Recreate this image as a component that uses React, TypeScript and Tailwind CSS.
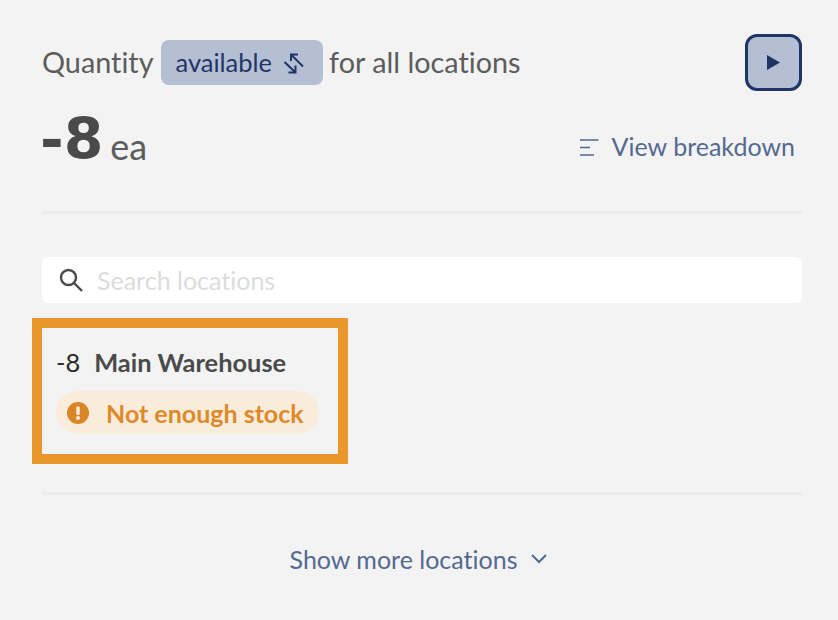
export default function App() {
  return (
    <div className="h-[620px] w-[838px] overflow-hidden bg-[#f3f3f3] pt-[34px] pr-[36px] pl-[42px] font-['Lato',sans-serif] [font-variant-ligatures:none]">
      {/* heading */}
      <div className="flex h-[57px] items-center justify-between">
        <div className="flex items-center text-[28.8px] text-[#5c5c5c]">
          <span>Quantity</span>
          <span className="mr-[6px] ml-[8px] flex h-[45px] items-center gap-[10px] rounded-[8px] bg-[#b5bfd4] pr-[17px] pl-[14px] text-[25.5px] text-[#1f3566]">
            available
            <svg width="24" height="24" viewBox="0 0 24 24" fill="none" stroke="#1f3566" strokeWidth="2">
              <path d="M21 15.5L9 3.5M16 3.5H9V10" />
              <path d="M2.5 11l11 10.5M6.5 21.5h7v-7" />
            </svg>
          </span>
          <span>for all locations</span>
        </div>
        <button className="flex h-[57px] w-[57px] items-center justify-center rounded-[12px] border-[3px] border-[#1f3566] bg-[#b5bfd4]">
          <svg width="13" height="15" viewBox="0 0 13 15" fill="#1f3566">
            <path d="M0 0l13 7.5L0 15z" />
          </svg>
        </button>
      </div>

      <div className="mt-[8px] flex h-[96px] items-center justify-between">
        <div className="mb-[16px] -ml-[2px] flex items-baseline gap-[7px]">
          <span className="font-['DejaVu_Sans',sans-serif] text-[57px] leading-none font-bold text-[#4a4a4a]">-8</span>
          <span className="translate-y-[1px] text-[36px] leading-none text-[#5c5c5c]">ea</span>
        </div>
        <div className="flex items-center gap-[13px] pr-[7px] text-[25px] text-[#54698f]">
          <svg width="19" height="19" viewBox="0 0 19 19" fill="none" stroke="#54698f" strokeWidth="1.6">
            <path d="M0 2h18.5M0 9.5h10M0 17h14" />
          </svg>
          View breakdown
        </div>
      </div>

      <div className="mt-[16px] h-[3px] bg-[#ebebeb]" />

      {/* search */}
      <div className="mt-[43px] flex h-[46px] items-center gap-[14px] rounded-[6px] bg-white px-[17px] text-[25px] text-[#dcdcdc]">
        <svg width="24" height="24" viewBox="0 0 24 24" fill="none" stroke="#4a4a4a" strokeWidth="2.4">
          <circle cx="9.5" cy="9.5" r="7.5" />
          <path d="M15 15l8 8" />
        </svg>
        <span className="pt-[2px]">Search locations</span>
      </div>

      {/* location */}
      <div className="mt-[15px] -ml-[10px] flex h-[146px] w-[316px] flex-col border-[10px] border-[#ea962a] pt-[19px] pl-[14px]">
        <div className="flex items-center gap-[14px] text-[25.4px] leading-[30px]">
          <span className="text-[#2a2a2a]">-8</span>
          <span className="font-bold text-[#4a4a4a]">Main Warehouse</span>
        </div>
        <div className="mt-[14px] flex h-[43px] w-[263px] items-center gap-[17px] rounded-full bg-[#faecdb] pl-[11px] text-[25px] font-bold text-[#dd8a2a]">
          <svg width="22" height="22" viewBox="0 0 22 22">
            <circle cx="11" cy="11" r="11" fill="#d98426" />
            <rect x="9.3" y="4.5" width="3.4" height="8.5" rx="1" fill="#faecdb" />
            <circle cx="11" cy="16" r="2" fill="#faecdb" />
          </svg>
          <span className="pt-[2px]">Not enough stock</span>
        </div>
      </div>

      <div className="mt-[28px] h-[3px] bg-[#ebebeb]" />

      <div className="mt-[44px] flex items-center justify-center gap-[14px] pr-[7px] text-[25px] leading-[40px] text-[#54698f]">
        Show more locations
        <svg width="16" height="10" viewBox="0 0 16 10" fill="none" stroke="#54698f" strokeWidth="2">
          <path d="M1 1l7 7 7-7" />
        </svg>
      </div>
    </div>
  );
}
